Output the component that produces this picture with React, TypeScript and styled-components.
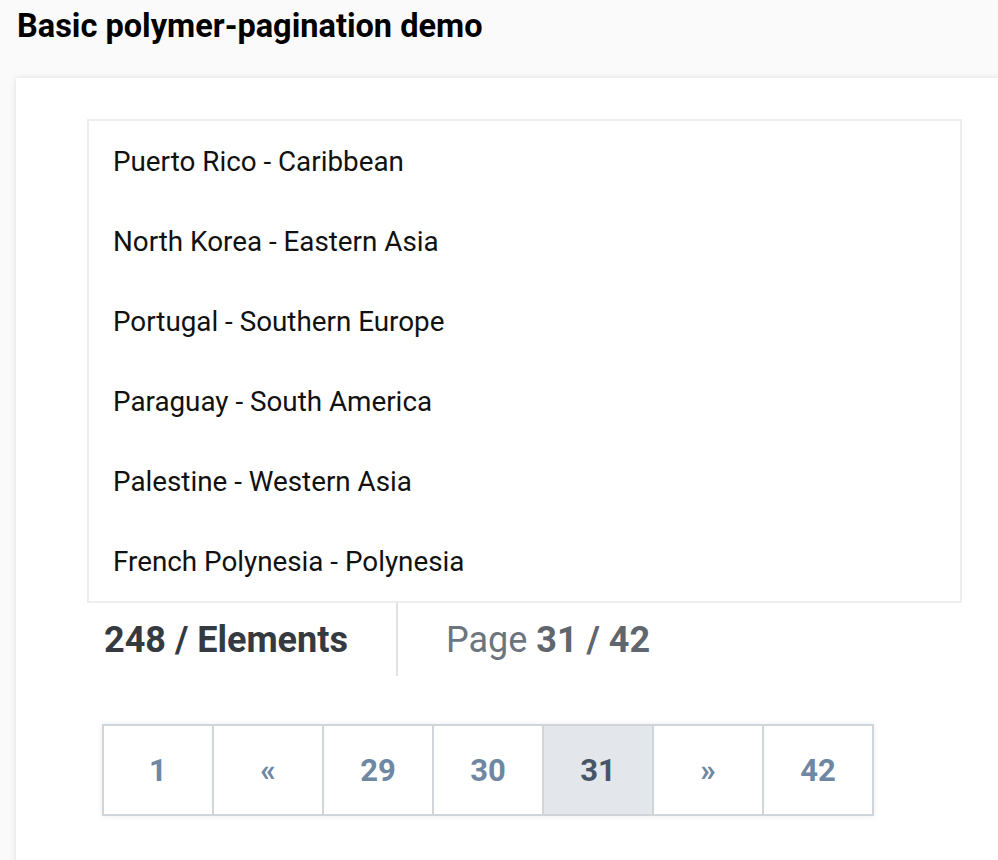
import React from "react";
import styled, { createGlobalStyle } from "styled-components";

const Global = createGlobalStyle`
  html, body { margin: 0; padding: 0; background: #fafafa; overflow: hidden; }
  body { font-family: Roboto, "Liberation Sans", sans-serif; }
`;

const Page = styled.div`
  padding: 0 0 0 16px;
`;

const Title = styled.h1`
  margin: 0;
  padding: 6px 0 0 1px;
  height: 78px;
  box-sizing: border-box;
  font-size: 32.5px;
  font-weight: 700;
  color: #000;
  line-height: 40px;
`;

const Card = styled.div`
  background: #fff;
  margin-right: -40px;
  min-height: 800px;
  padding: 41px 0 0 71px;
  box-shadow: 0 0 6px rgba(0, 0, 0, 0.12);
`;

const List = styled.ul`
  list-style: none;
  margin: 0;
  padding: 0;
  width: 871px;
  border: 2px solid #eeeeee;
  box-sizing: content-box;
`;

const Item = styled.li`
  height: 80px;
  display: flex;
  align-items: center;
  padding-left: 24px;
  font-size: 27.8px;
  color: #111;
`;

const Stats = styled.div`
  display: flex;
  height: 73px;
  align-items: center;
`;

const Count = styled.div`
  padding: 0 48px 0 17px;
  font-size: 36px;
  font-weight: 700;
  color: #343a40;
`;

const PageInfo = styled.div`
  align-self: stretch;
  display: flex;
  align-items: center;
  border-left: 2px solid #dfe2e6;
  padding-left: 48px;
  font-size: 36px;
  color: #6c757d;
  b { font-weight: 700; color: #5f666d; }
`;

const Pager = styled.nav`
  display: inline-flex;
  margin: 48px 0 0 15px;
  border: 2px solid #d0d5da;
  box-shadow: 0 0 6px rgba(0, 0, 0, 0.08);
`;

const PageBtn = styled.div<{ $active?: boolean }>`
  width: 108px;
  height: 88px;
  display: flex;
  align-items: center;
  justify-content: center;
  font-size: 31px;
  font-weight: 700;
  color: ${(p) => (p.$active ? "#475568" : "#6e87a2")};
  background: ${(p) => (p.$active ? "#e3e6ea" : "#fff")};
  & + & { border-left: 2px solid #d0d5da; }
`;

const items = [
  "Puerto Rico - Caribbean",
  "North Korea - Eastern Asia",
  "Portugal - Southern Europe",
  "Paraguay - South America",
  "Palestine - Western Asia",
  "French Polynesia - Polynesia",
];

const pages = [
  { label: "1" },
  { label: "«" },
  { label: "29" },
  { label: "30" },
  { label: "31", active: true },
  { label: "»" },
  { label: "42" },
];

export default function App() {
  return (
    <>
      <Global />
      <Page>
        <Title>Basic polymer-pagination demo</Title>
        <Card>
          <List>
            {items.map((t) => (
              <Item key={t}>{t}</Item>
            ))}
          </List>
          <Stats>
            <Count>248 / Elements</Count>
            <PageInfo>
              <span>
                Page <b>31 / 42</b>
              </span>
            </PageInfo>
          </Stats>
          <Pager>
            {pages.map((p) => (
              <PageBtn key={p.label} $active={p.active}>
                {p.label}
              </PageBtn>
            ))}
          </Pager>
        </Card>
      </Page>
    </>
  );
}
